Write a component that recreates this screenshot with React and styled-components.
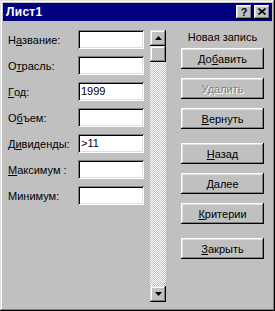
import React from 'react';
import styled, { createGlobalStyle } from 'styled-components';

const Global = createGlobalStyle`
  html, body { margin: 0; padding: 0; background: #c0c0c0; }
  body { font-family: "Liberation Sans", Arial, sans-serif; font-size: 11px; color: #000; }
`;

const Window = styled.div`
  width: 275px;
  height: 311px;
  box-sizing: border-box;
  background: #c0c0c0;
  padding: 3px;
  box-shadow: inset -1px -1px #000, inset 1px 1px #dfdfdf, inset -2px -2px #808080, inset 2px 2px #fff;
  display: flex;
  flex-direction: column;
`;

const TitleBar = styled.div`
  height: 18px;
  background: #000080;
  display: flex;
  align-items: center;
  justify-content: space-between;
  padding: 0 2px 0 3px;
`;

const Title = styled.span`
  color: #fff;
  font-weight: bold;
  font-size: 12px;
  letter-spacing: 0.3px;
`;

const CaptionGroup = styled.div`
  display: flex;
  gap: 2px;
`;

const CaptionButton = styled.div`
  width: 16px;
  height: 14px;
  box-sizing: border-box;
  background: #c0c0c0;
  box-shadow: inset -1px -1px #000, inset 1px 1px #fff, inset -2px -2px #808080, inset 2px 2px #dfdfdf;
  display: flex;
  align-items: center;
  justify-content: center;
  font-weight: bold;
  font-size: 11px;
  line-height: 14px;
  padding-bottom: 1px;
`;

const Body = styled.div`
  flex: 1;
  display: flex;
  padding: 9px 0 0 5px;
`;

const Fields = styled.div`
  display: grid;
  grid-template-columns: 70px 66px;
  grid-auto-rows: 19px;
  row-gap: 7px;
  align-content: start;
`;

const Label = styled.div`
  display: flex;
  align-items: center;
  white-space: nowrap;
`;

const Field = styled.div`
  background: #fff;
  box-shadow: inset 1px 1px #808080, inset -1px -1px #fff, inset 2px 2px #000, inset -2px -2px #dfdfdf;
  padding-left: 3px;
  line-height: 19px;
`;

const Scrollbar = styled.div`
  width: 16px;
  height: 272px;
  margin-left: 6px;
  display: flex;
  flex-direction: column;
  background: repeating-conic-gradient(#c0c0c0 0% 25%, #ffffff 0% 50%) 0 0 / 2px 2px;
`;

const ScrollButton = styled.div`
  width: 16px;
  height: 16px;
  box-sizing: border-box;
  background: #c0c0c0;
  box-shadow: inset -1px -1px #000, inset 1px 1px #dfdfdf, inset -2px -2px #808080, inset 2px 2px #fff;
  display: flex;
  align-items: center;
  justify-content: center;
`;

const Spacer = styled.div`
  flex: 1;
`;

const Side = styled.div`
  margin-left: 15px;
  width: 83px;
  display: flex;
  flex-direction: column;
`;

const SideHeader = styled.div`
  height: 18px;
  box-sizing: border-box;
  padding-top: 1px;
  line-height: 13px;
  text-align: center;
  white-space: nowrap;
`;

const Button = styled.div`
  height: 21px;
  margin-top: ${p => p.$gap}px;
  box-sizing: border-box;
  background: #c0c0c0;
  box-shadow: inset -1px -1px #000, inset 1px 1px #fff, inset -2px -2px #808080, inset 2px 2px #dfdfdf;
  display: flex;
  align-items: center;
  justify-content: center;
  color: ${p => (p.$disabled ? '#808080' : '#000')};
  text-shadow: ${p => (p.$disabled ? '1px 1px 0 #fff' : 'none')};
`;

const Key = styled.span`
  text-decoration: underline;
`;

const Arrow = ({ dir }) => (
  <svg width="7" height="4" viewBox="0 0 7 4">
    {dir === 'up' ? (
      <polygon points="3.5,0 7,4 0,4" fill="#000" />
    ) : (
      <polygon points="0,0 7,0 3.5,4" fill="#000" />
    )}
  </svg>
);

const CloseGlyph = () => (
  <svg width="8" height="7" viewBox="0 0 8 7">
    <path d="M0.5 0.5 L7.5 6.5 M7.5 0.5 L0.5 6.5" stroke="#000" strokeWidth="1.6" />
  </svg>
);

const fields = [
  { label: <>Н<Key>а</Key>звание:</>, value: '' },
  { label: <>О<Key>т</Key>расль:</>, value: '' },
  { label: <><Key>Г</Key>од:</>, value: '1999' },
  { label: <>О<Key>б</Key>ъем:</>, value: '' },
  { label: <>Д<Key>и</Key>виденды:</>, value: '>11' },
  { label: <><Key>М</Key>аксимум :</>, value: '' },
  { label: <>Минимум:</>, value: '' },
];

const buttons = [
  { text: <>До<Key>б</Key>авить</>, gap: 0 },
  { text: <>Удалить</>, gap: 9, disabled: true },
  { text: <><Key>В</Key>ернуть</>, gap: 9 },
  { text: <><Key>Н</Key>азад</>, gap: 14 },
  { text: <><Key>Д</Key>алее</>, gap: 9 },
  { text: <><Key>К</Key>ритерии</>, gap: 9 },
  { text: <><Key>З</Key>акрыть</>, gap: 14 },
];

export default function App() {
  return (
    <>
      <Global />
      <Window>
        <TitleBar>
          <Title>Лист1</Title>
          <CaptionGroup>
            <CaptionButton>?</CaptionButton>
            <CaptionButton><CloseGlyph /></CaptionButton>
          </CaptionGroup>
        </TitleBar>
        <Body>
          <Fields>
            {fields.map((f, i) => (
              <React.Fragment key={i}>
                <Label>{f.label}</Label>
                <Field>{f.value}</Field>
              </React.Fragment>
            ))}
          </Fields>
          <Scrollbar>
            <ScrollButton><Arrow dir="up" /></ScrollButton>
            <ScrollButton />
            <Spacer />
            <ScrollButton><Arrow dir="down" /></ScrollButton>
          </Scrollbar>
          <Side>
            <SideHeader>Новая запись</SideHeader>
            {buttons.map((b, i) => (
              <Button key={i} $gap={b.gap} $disabled={b.disabled}>{b.text}</Button>
            ))}
          </Side>
        </Body>
      </Window>
    </>
  );
}
